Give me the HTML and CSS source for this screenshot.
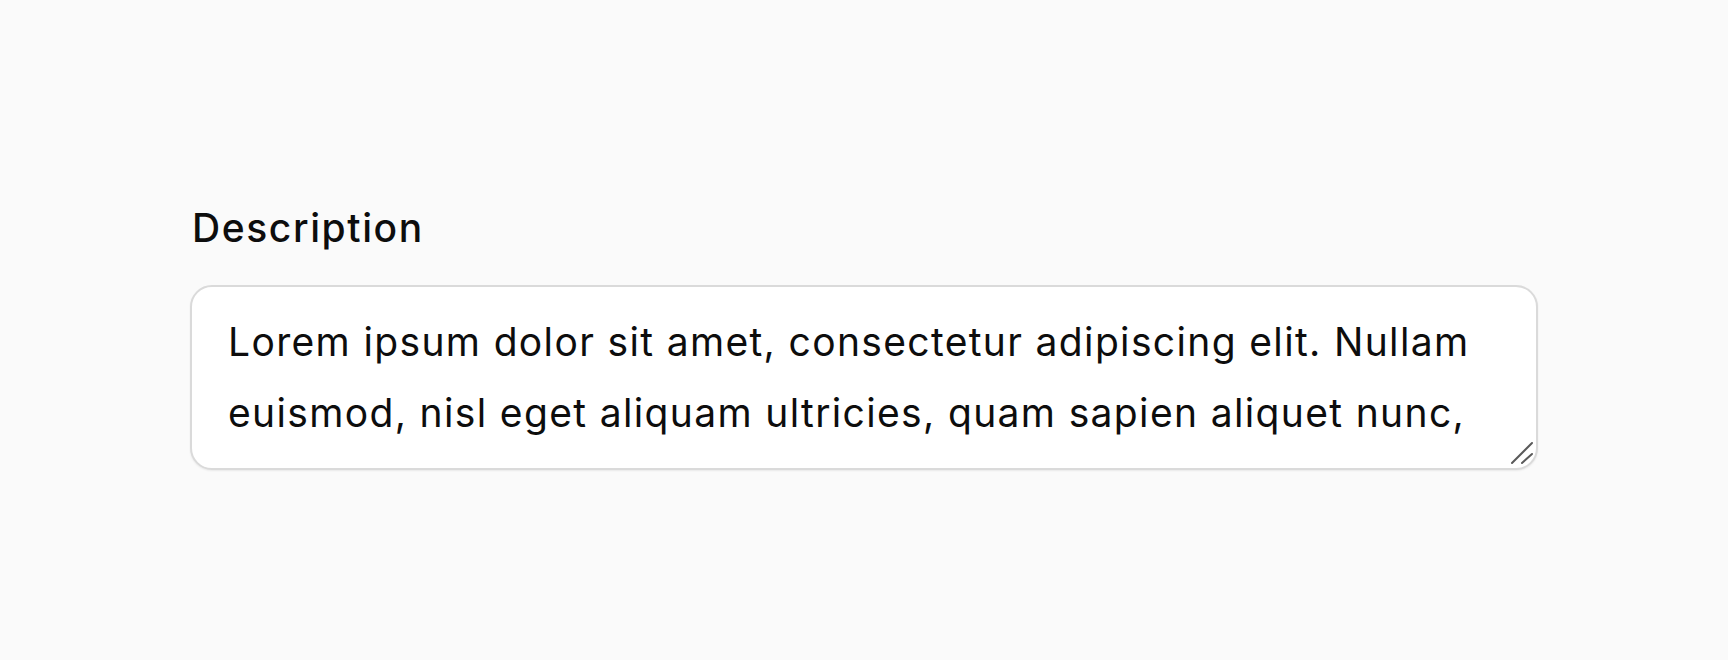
FILE: index.html
```html
<!DOCTYPE html>
<html lang="en">
<head>
<meta charset="utf-8">
<title>Description</title>
<link rel="stylesheet" href="styles.css">
</head>
<body>
<main class="page">
  <div class="field">
    <label class="field-label" for="desc">Description</label>
    <div class="textarea-wrap">
      <textarea id="desc" class="textarea">Lorem ipsum dolor sit amet, consectetur adipiscing elit. Nullam euismod, nisl eget aliquam ultricies, quam sapien aliquet nunc, vitae aliquam nisl nunc eu nisl. Sed euismod, nunc id aliquet tincidunt, nisl nunc aliquam nunc.</textarea>
      <svg class="grip" width="24" height="24" viewBox="0 0 24 24" aria-hidden="true">
        <line x1="2" y1="22" x2="22" y2="2" />
        <line x1="12" y1="22" x2="22" y2="13" />
      </svg>
    </div>
  </div>
</main>
</body>
</html>
```

FILE: styles.css
```css
html, body {
  margin: 0;
  padding: 0;
}
body {
  background: #fafafa;
  font-family: Inter, "Noto Sans", "Liberation Sans", sans-serif;
  color: #0d0d0d;
  height: 660px;
  overflow: hidden;
}
.page {
  display: flex;
  justify-content: center;
  padding-top: 205px;
}
.field {
  width: 1348px;
  display: flex;
  flex-direction: column;
  gap: 34px;
}
.field-label {
  padding-left: 2px;
  font-size: 39px;
  font-weight: 500;
  line-height: 46px;
  letter-spacing: 1.6px;
  color: #0d0d0d;
}
.textarea-wrap {
  position: relative;
}
.textarea {
  display: block;
  box-sizing: border-box;
  width: 100%;
  height: 185px;
  margin: 0;
  padding: 19px 34px 15px 36px;
  border: 2px solid #dadada;
  border-radius: 22px;
  background: #fff;
  font-family: Inter, "Noto Sans", "Liberation Sans", sans-serif;
  font-size: 39px;
  line-height: 71px;
  letter-spacing: 1.35px;
  color: #0d0d0d;
  resize: none;
  overflow: hidden;
  outline: none;
  box-shadow: 0 1px 2px rgba(0, 0, 0, 0.07);
}
.grip {
  position: absolute;
  right: 4px;
  bottom: 5px;
  stroke: #5a5a5a;
  stroke-width: 2;
  stroke-linecap: round;
}
```
